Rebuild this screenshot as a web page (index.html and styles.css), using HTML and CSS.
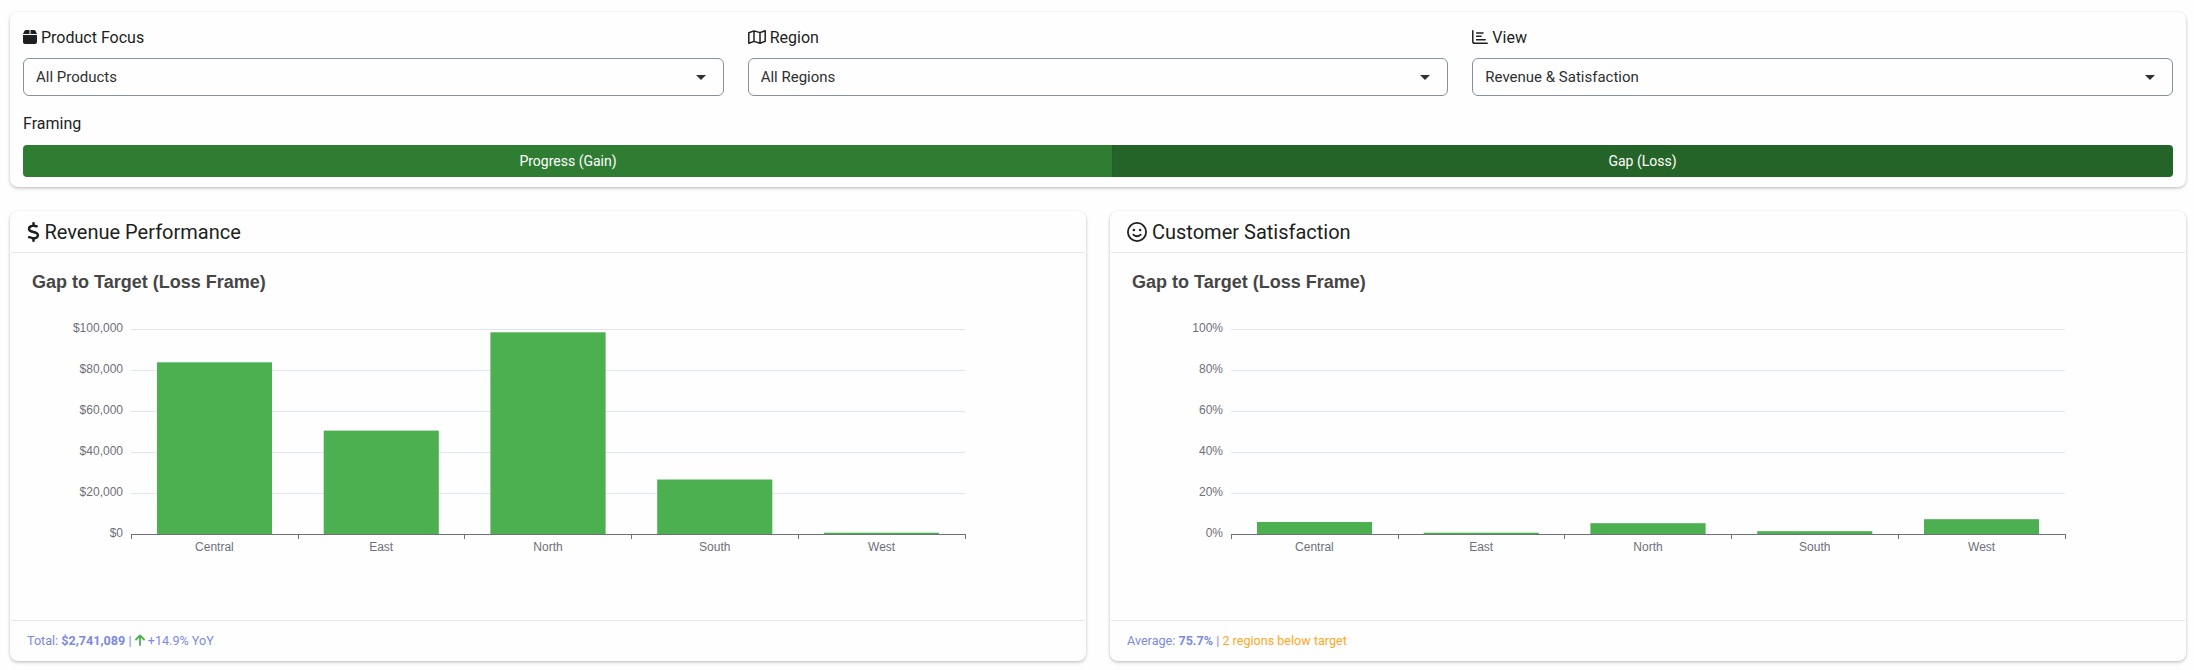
FILE: index.html
```html
<!DOCTYPE html>
<html lang="en">
<head>
<meta charset="utf-8">
<title>Sales Dashboard</title>
<link rel="stylesheet" href="styles.css">
</head>
<body>
<section class="card filters">
  <div class="fields">
    <div class="field">
      <div class="label"><svg class="ico box" viewBox="0 0 448 512"><path d="M50.7 58.5L0 160H208V32H93.7C75.5 32 58.9 42.3 50.7 58.5zM240 160H448L397.3 58.5C389.1 42.3 372.5 32 354.3 32H240V160zm208 32H0V416c0 35.300 28.700 64 64 64H384c35.300 0 64-28.700 64-64V192z"/></svg>Product Focus</div>
      <div class="select"><span>All Products</span><i class="caret"></i></div>
    </div>
    <div class="field">
      <div class="label"><svg class="ico map line" viewBox="0 0 18 16"><path d="M.8 3.800L6 1.900L12 3.600L17.200 1.700V12.300L12 14.200L6 12.400L.8 14.300ZM6 1.900V12.400M12 3.600V14.200"/></svg>Region</div>
      <div class="select"><span>All Regions</span><i class="caret"></i></div>
    </div>
    <div class="field">
      <div class="label"><svg class="ico bars line" viewBox="0 0 16 16"><path d="M.8 1.800V12.500Q.8 14.300 2.600 14.300H15.200M4.600 4H11M4.600 7.300H9M4.600 10.700H13.200"/></svg>View</div>
      <div class="select"><span>Revenue &amp; Satisfaction</span><i class="caret"></i></div>
    </div>
  </div>
  <div class="label framing">Framing</div>
  <div class="toggle"><div class="opt gain">Progress (Gain)</div><div class="opt loss">Gap (Loss)</div></div>
</section>
<main class="charts">
  <section class="card panel">
    <header><svg class="dollar" viewBox="0 0 320 512"><path d="M160 0c17.700 0 32 14.300 32 32V67.700c1.600 .2 3.100 .4 4.700 .7c.4 .1 .7 .1 1.100 .2l48 8.800c17.400 3.200 28.900 19.900 25.700 37.200s-19.900 28.900-37.200 25.700l-47.500-8.700c-31.300-4.600-58.900-1.500-78.300 6.200s-27.200 18.300-29 28.100c-2 10.700-.5 16.700 1.200 20.400c1.800 3.900 5.500 8.300 12.800 13.200c16.300 10.700 41.300 17.700 73.700 26.300l2.900 .8c28.600 7.600 63.600 16.800 89.600 33.800c14.200 9.300 27.600 21.900 35.900 39.500c8.500 17.900 10.300 37.900 6.400 59.200c-6.900 38-33.100 63.400-65.600 76.700c-13.700 5.600-28.600 9.200-44.400 11V480c0 17.700-14.300 32-32 32s-32-14.300-32-32V445.100c-.4-.1-.9-.1-1.300-.2l-.2 0c-24.400-3.800-64.500-14.300-91.500-26.300c-16.100-7.200-23.400-26.100-16.200-42.200s26.100-23.400 42.200-16.200c20.900 9.300 55.300 18.500 75.200 21.600c31.900 4.700 58.200 2 76-5.300c16.900-6.900 24.600-16.900 26.800-28.900c1.900-10.600 .4-16.700-1.300-20.400c-1.900-4-5.600-8.400-13-13.300c-16.400-10.700-41.500-17.700-74-26.300l-2.800-.7C119.400 279.300 84.400 270 58.400 253c-14.200-9.300-27.500-22-35.800-39.600c-8.400-17.900-10.100-37.900-6.100-59.200C23.700 116 52.300 91.200 84.800 78.300c13.300-5.300 27.900-8.900 43.200-11V32c0-17.700 14.300-32 32-32z"/></svg>Revenue Performance</header>
    <svg class="plot" width="1074" height="367" viewBox="11 253 1074 367">
      <text class="title" x="32" y="288">Gap to Target (Loss Frame)</text>
      <path class="grid" d="M131 329.500H965M131 370.500H965M131 411.500H965M131 452.500H965M131 493.500H965"/>
      <g class="bar"><rect x="157" y="362.300" width="115" height="171.700"/><rect x="323.700" y="430.600" width="115.100" height="103.400"/><rect x="490.400" y="332.300" width="115.200" height="201.700"/><rect x="657.200" y="479.500" width="115.100" height="54.500"/><rect x="824" y="532.700" width="115" height="1.300"/></g>
      <path class="axis" d="M131 534.500H965.500M131.500 534V539M298.500 534V539M464.500 534V539M631.500 534V539M798.500 534V539M965.500 534V539"/>
      <g class="tick y"><text x="123" y="332">$100,000</text><text x="123" y="373">$80,000</text><text x="123" y="414">$60,000</text><text x="123" y="455">$40,000</text><text x="123" y="496">$20,000</text><text x="123" y="537">$0</text></g>
      <g class="tick x"><text x="214.400" y="551">Central</text><text x="381.200" y="551">East</text><text x="548" y="551">North</text><text x="714.800" y="551">South</text><text x="881.600" y="551">West</text></g>
    </svg>
    <footer>Total: <b>$2,741,089</b> | <svg class="arrow" viewBox="0 0 10 12"><path d="M5 11V1.500M1 5.500L5 1.500L9 5.500"/></svg> +14.9% YoY</footer>
  </section>
  <section class="card panel">
    <header><svg class="smile" viewBox="0 0 20 20"><circle cx="10" cy="10" r="9.100"/><path d="M6.300 12.600Q10 16 13.700 12.600"/><circle class="eye" cx="6.900" cy="8.100" r="1.250"/><circle class="eye" cx="13.100" cy="8.100" r="1.250"/></svg>Customer Satisfaction</header>
    <svg class="plot" width="1074" height="367" viewBox="11 253 1074 367">
      <text class="title" x="32" y="288">Gap to Target (Loss Frame)</text>
      <path class="grid" d="M131 329.500H965M131 370.500H965M131 411.500H965M131 452.500H965M131 493.500H965"/>
      <g class="bar"><rect x="157" y="522" width="115" height="12"/><rect x="323.700" y="532.700" width="115.100" height="1.300"/><rect x="490.400" y="523.200" width="115.200" height="10.800"/><rect x="657.200" y="531.200" width="115.100" height="2.800"/><rect x="824" y="519.200" width="115" height="14.800"/></g>
      <path class="axis" d="M131 534.500H965.500M131.500 534V539M298.500 534V539M464.500 534V539M631.500 534V539M798.500 534V539M965.500 534V539"/>
      <g class="tick y"><text x="123" y="332">100%</text><text x="123" y="373">80%</text><text x="123" y="414">60%</text><text x="123" y="455">40%</text><text x="123" y="496">20%</text><text x="123" y="537">0%</text></g>
      <g class="tick x"><text x="214.400" y="551">Central</text><text x="381.200" y="551">East</text><text x="548" y="551">North</text><text x="714.800" y="551">South</text><text x="881.600" y="551">West</text></g>
    </svg>
    <footer>Average: <b>75.7%</b> | <span class="warn">2 regions below target</span></footer>
  </section>
</main>
</body>
</html>
```
FILE: styles.css
```css
* { box-sizing: border-box; }
body { margin: 0; min-height: 670px; padding: 12px 8px 9px 10px; background: #fefefe; color: #1d1f21; font: 16px/24px Roboto, sans-serif; }
.card { background: #fefefe; border-radius: 8px; box-shadow: 0 1px 3px rgba(0,0,0,.2), 0 2px 4px rgba(0,0,0,.08); }
.filters { height: 175px; padding: 13px; }
.fields { display: grid; grid-template-columns: repeat(3, 1fr); gap: 24px; }
.label { height: 24px; padding-top: 2px; display: flex; align-items: center; }
.ico { height: 16px; margin: -2px 4px 0 0; fill: currentColor; }
.line { fill: none; stroke: currentColor; stroke-width: 1.5; stroke-linejoin: round; stroke-linecap: round; }
.box { width: 14px; }
.map { width: 18px; }
.bars { width: 16px; }
.select { height: 38px; margin-top: 9px; padding: 0 17px 0 12px; border: 1px solid #87909e; border-radius: 6px; display: flex; align-items: center; justify-content: space-between; font-size: 15px; color: #303030; }
.caret { border: 5px solid transparent; border-top-color: #303030; border-bottom: 0; }
.framing { margin-top: 15px; }
.toggle { display: flex; height: 32px; margin-top: 10px; border-radius: 4px; overflow: hidden; color: #fff; font-size: 14px; line-height: 32px; text-align: center; }
.gain { width: 1089px; padding-left: 1px; background: #2e7d32; }
.loss { flex: 1; padding-right: 1px; background: #256428; border-left: 1px solid #235f27; }
.charts { display: grid; grid-template-columns: 1fr 1fr; gap: 24px; margin-top: 24px; }
.panel { height: 450px; padding: 1px; }
.panel header { height: 41px; padding: 0 16px; border-bottom: 1px solid #e4e7ed; display: flex; align-items: center; font-size: 20px; }
.dollar { width: 13px; height: 20px; margin-right: 4.5px; fill: currentColor; }
.smile { width: 20px; height: 20px; margin-right: 5px; fill: none; stroke: currentColor; stroke-width: 1.8; stroke-linecap: round; }
.smile .eye { fill: currentColor; stroke: none; }
.plot { display: block; font-family: "Liberation Sans", Arial, sans-serif; }
.title { font-size: 18px; font-weight: bold; fill: #464646; }
.grid { stroke: #e0e6f1; }
.axis { stroke: #6e7079; fill: none; }
.bar { fill: #4caf50; }
.tick { font-size: 12px; fill: #6e7079; }
.tick.y { text-anchor: end; }
.tick.x { text-anchor: middle; }
.panel footer { height: 40px; padding: 0 16px; border-top: 1px solid #e8e8e8; line-height: 39px; font-size: 12.6px; color: #7c8ae0; }
.arrow { width: 10px; height: 12px; vertical-align: -1px; fill: none; stroke: #4caf50; stroke-width: 1.8; stroke-linecap: round; stroke-linejoin: round; }
.warn { color: #ffa726; }
```
